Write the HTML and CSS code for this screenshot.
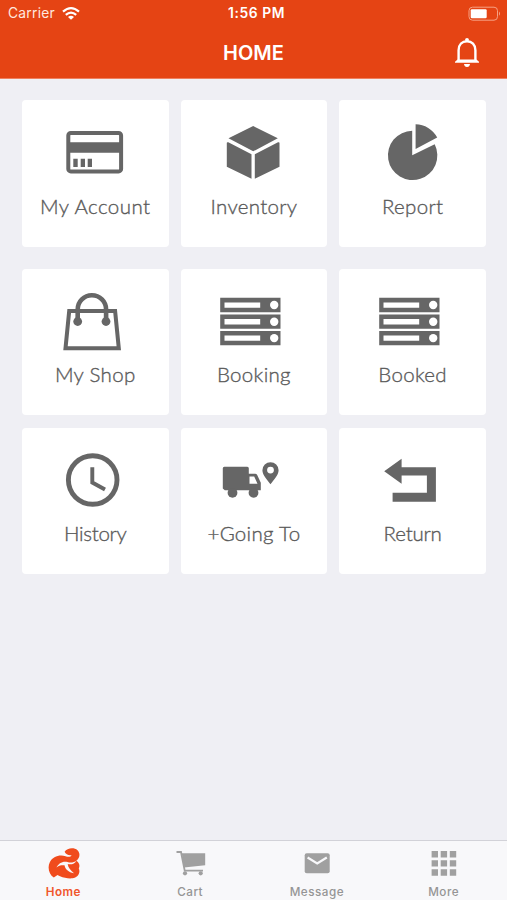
FILE: index.html
```html
<!DOCTYPE html>
<html lang="en">
<head>
<meta charset="utf-8">
<title>Home</title>
<link rel="stylesheet" href="styles.css">
</head>
<body>
<div class="app">
  <header class="header">
    <div class="status">
      <div class="carrier">Carrier
        <svg class="wifi" width="18" height="13" viewBox="0 0 18 13" fill="none" stroke="#fff" stroke-width="2.2"><path d="M1 4.700Q9-2.300 17 4.700M3.800 7.900Q9 3.300 14.200 7.900"/><path d="M6 10Q9 7.500 12 10L9 12.800Z" fill="#fff" stroke="none"/></svg>
      </div>
      <div class="time">1:56 PM</div>
      <div class="power"><svg width="33" height="16" viewBox="0 0 33 16"><rect x="1" y="1.200" width="28.500" height="13" rx="3.500" fill="none" stroke="#f6a184"/><rect x="2.700" y="3.200" width="16" height="9" rx="1.200" fill="#fff"/><path d="M31 5.400Q33 7.500 31 9.700Z" fill="#f6a184"/></svg></div>
    </div>
    <div class="navbar">
      <h1 class="title">HOME</h1>
      <svg class="bell" width="26" height="31" viewBox="0 0 26 31"><path d="M4.600 23.600V13.200C4.600 7.500 8.200 4.300 13 4.300S21.400 7.500 21.400 13.200V23.600" fill="none" stroke="#fff" stroke-width="2.400"/><path d="M1 25.800V24.800L3.600 22.600H22.400L25 24.800V25.800Z" fill="#fff"/><circle cx="13" cy="2.800" r="1.900" fill="#fff"/><path d="M10 27H16Q15.600 30 13 30T10 27Z" fill="#fff"/></svg>
    </div>
  </header>
  <main class="content">
    <section class="grid">
      <div class="card"><svg class="icon" viewBox="0 0 147 94"><rect x="46.300" y="33" width="52.800" height="38.400" rx="2.500" fill="none" stroke="#666" stroke-width="4"/><path d="M46 42.300H99V52.700H46ZM51.300 58.700H55.700V67H51.300ZM58.700 58.700H63V67H58.700ZM65.700 58.700H70V67H65.700Z"/></svg><span class="label account">My Account</span></div>
      <div class="card"><svg class="icon" viewBox="0 0 147 94"><path d="M73.200 26L97.800 38.300L73.200 51.300L48.500 38.300ZM48.300 42.300L71.500 54.300V78.700L46.800 66.700V43.100Q46.800 41.800 48.300 42.300ZM98 42.300Q99.500 41.800 99.500 43.100V66.700L74.800 78.700V54.300Z"/></svg><span class="label">Inventory</span></div>
      <div class="card"><svg class="icon" viewBox="0 0 147 94"><path d="M73.200 55.300V30.700A24.700 24.700 0 1 0 95.700 44.300ZM76.600 49V24.300A24.700 24.700 0 0 1 98.200 37.500Z"/></svg><span class="label">Report</span></div>
    </section>
    <section class="grid second">
      <div class="card"><svg class="icon" viewBox="0 0 147 94"><g fill="none" stroke="#666"><path d="M47.200 42.100H93.100L96.800 79.200H43.500Z" stroke-width="4"/><path d="M55.700 52V40.400A14.200 14.200 0 0 1 84.100 40.400V52" stroke-width="4.600"/></g><circle cx="55.700" cy="52.500" r="4.400"/><circle cx="84" cy="52.500" r="4.400"/></svg><span class="label">My Shop</span></div>
      <div class="card"><svg class="icon" viewBox="0 0 147 94"><path d="M40.200 28.800H100.500V43.200H40.200ZM40.200 45.500H100.500V59.800H40.200ZM40.200 61.900H100.500V76.300H40.200Z"/><path fill="#fff" d="M44.500 33.400H80.200V38.800H44.500ZM44.500 50H80.200V55.400H44.500ZM44.500 66.400H80.200V71.800H44.500Z"/><g fill="#fff"><circle cx="94.200" cy="36" r="4.200"/><circle cx="94.200" cy="52.700" r="4.200"/><circle cx="94.200" cy="69.100" r="4.200"/></g></svg><span class="label">Booking</span></div>
      <div class="card"><svg class="icon" viewBox="0 0 147 94"><path d="M40.200 28.800H100.500V43.200H40.200ZM40.200 45.500H100.500V59.800H40.200ZM40.200 61.900H100.500V76.300H40.200Z"/><path fill="#fff" d="M44.500 33.400H80.200V38.800H44.500ZM44.500 50H80.200V55.400H44.500ZM44.500 66.400H80.200V71.800H44.500Z"/><g fill="#fff"><circle cx="94.200" cy="36" r="4.200"/><circle cx="94.200" cy="52.700" r="4.200"/><circle cx="94.200" cy="69.100" r="4.200"/></g></svg><span class="label">Booked</span></div>
      <div class="card"><svg class="icon" viewBox="0 0 147 94"><circle cx="70.700" cy="52" r="24.300" fill="none" stroke="#666" stroke-width="4.900"/><path d="M70.300 39.200V54.500L83 61.500" fill="none" stroke="#666" stroke-width="3.900"/></svg><span class="label history">History</span></div>
      <div class="card"><svg class="icon" viewBox="0 0 147 94"><path fill-rule="evenodd" d="M44.300 38.800H67.300Q68.800 38.800 68.800 40.300V45.800H75.200Q76.500 45.800 77.200 47L80.800 54.800V62.200H44.800L42.800 60.500V40.300Q42.800 38.800 44.300 38.800ZM69.500 48.500V55.800H77.500L74.200 48.500Z"/><circle cx="52.500" cy="64.800" r="4.900"/><circle cx="73.500" cy="64.800" r="4.900"/><path fill-rule="evenodd" d="M90.500 56.200C87.500 52.500 82.400 47 82.400 42.300A8.100 8.100 0 0 1 98.600 42.300C98.600 47 93.500 52.500 90.500 56.200ZM90.500 38.700A3.400 3.400 0 1 0 90.500 45.500A3.400 3.400 0 1 0 90.500 38.700Z"/></svg><span class="label going">+Going To</span></div>
      <div class="card"><svg class="icon" viewBox="0 0 147 94"><path d="M45.200 43.200L62.600 30.800V39.200H96.900V73.800H53.600V64.800H87.900V47.500H62.600V55.800Z"/></svg><span class="label return">Return</span></div>
    </section>
  </main>
  <nav class="tabs">
    <div class="tab active"><svg width="34" height="34" viewBox="0 0 34 34"><path fill="#f04b1c" d="M18.600 4.800C21 1 28 .2 31.500 3.200C34.500 6 34 11.200 30.300 13.800C33.200 15.500 34.200 18.500 32.800 21.500C34.800 26 31.500 30.800 26.500 31.300C22.500 31.700 18 31 14 29.300L11.500 28L7.800 30.600C3 27.500 1.200 20.500 3.800 15.300C6.600 9.700 13.500 7.300 19.500 9.300C22.500 10.300 25 9.800 25.500 8.200C22.500 8.700 19.800 7.500 18.600 4.800Z"/><path fill="#f8f8fa" d="M10.500 20.500C12.500 16 17 13.700 21.500 15C24.500 16 28 15.500 30.500 13.700C29 16.800 25.500 17.800 21.700 17.100C22 20.500 24.500 23.200 28 26.300C22.500 25.500 19 22 18.500 18.300C15.500 18 12.500 18.500 10.500 20.500Z"/></svg><span>Home</span></div>
    <div class="tab"><svg width="34" height="34" viewBox="0 0 34 34"><path fill="#a0a0a0" d="M8.800 6.200H32.200V18.200L11 20.500Z"/><path d="M3.500 5H8L11.700 23.600H30" fill="none" stroke="#a0a0a0" stroke-width="1.800"/><circle cx="12" cy="26.300" r="2.100" fill="#a0a0a0"/><circle cx="27.700" cy="26.300" r="2.100" fill="#a0a0a0"/></svg><span>Cart</span></div>
    <div class="tab"><svg width="34" height="34" viewBox="0 0 34 34"><rect x="4.700" y="6.300" width="25" height="20" rx="2" fill="#a0a0a0"/><path d="M7.600 10.500L17.200 16.400L26.800 10.500" fill="none" stroke="#f8f8fa" stroke-width="2.200"/></svg><span>Message</span></div>
    <div class="tab"><svg width="34" height="34" viewBox="0 0 34 34"><path fill="#a0a0a0" d="M4.600 4.100h6.400v6.400H4.600zM13.700 4.100h6.400v6.400H13.700zM22.800 4.100h6.400v6.400H22.800zM4.600 13.200h6.400v6.400H4.600zM13.700 13.200h6.400v6.400H13.700zM22.800 13.200h6.400v6.400H22.800zM4.600 22.300h6.400v6.400H4.600zM13.700 22.300h6.400v6.400H13.700zM22.800 22.300h6.400v6.400H22.800z"/></svg><span>More</span></div>
  </nav>
</div>
</body>
</html>
```

FILE: styles.css
```css
* { box-sizing: border-box; }
body { margin: 0; font-family: Inter, "Liberation Sans", sans-serif; }
.app { width: 507px; height: 900px; display: flex; flex-direction: column; background: #efeff4; overflow: hidden; }
.header { height: 79px; flex: none; background: #e54414; border-bottom: 1px solid #ee8060; color: #fff; }
.status { height: 27px; display: grid; grid-template-columns: 1fr auto 1fr; align-items: center; padding: 0 6px 0 8px; font-size: 13.8px; line-height: 27px; }
.carrier { display: flex; align-items: center; gap: 7px; letter-spacing: .25px; color: #ffe8df; }
.time { font-weight: 600; font-size: 13.8px; letter-spacing: .6px; margin-left: 4px; }
.power { display: flex; justify-content: flex-end; }
.navbar { height: 51px; display: grid; grid-template-columns: 1fr auto 1fr; align-items: center; padding-right: 27px; padding-left: 27px; }
.title { grid-column: 2; margin: 0; font-size: 20px; line-height: 24px; font-weight: 600; }
.bell { justify-self: end; }
.content { flex: 1; padding: 21px 20.5px 0 22px; }
.grid { display: grid; grid-template-columns: repeat(3, 146.5px); gap: 12.5px 12.2px; }
.second { margin-top: 22px; }
.card { height: 146.5px; background: #fff; border-radius: 4px; display: flex; flex-direction: column; align-items: center; }
.icon { width: 147px; height: 94px; fill: #666; flex: none; }
.label { font: 300 20.5px/25px Lato, sans-serif; letter-spacing: .3px; color: #5a5a5a; -webkit-text-stroke: .35px #5a5a5a; white-space: nowrap; }
.account { letter-spacing: .45px; }
.history { letter-spacing: -.3px; }
.return { letter-spacing: -.2px; }
.second .label { margin-top: -.5px; }
.tabs { height: 60px; flex: none; display: grid; grid-template-columns: repeat(4, 1fr); background: #f8f8fa; border-top: 1px solid #d2d2d8; }
.tab { display: flex; flex-direction: column; align-items: center; padding-top: 6px; font-size: 11.7px; font-weight: 500; letter-spacing: .5px; line-height: 15px; color: #959595; }
.tab span { margin-top: 4px; }
.active { color: #f0562c; font-weight: 600; }
```
